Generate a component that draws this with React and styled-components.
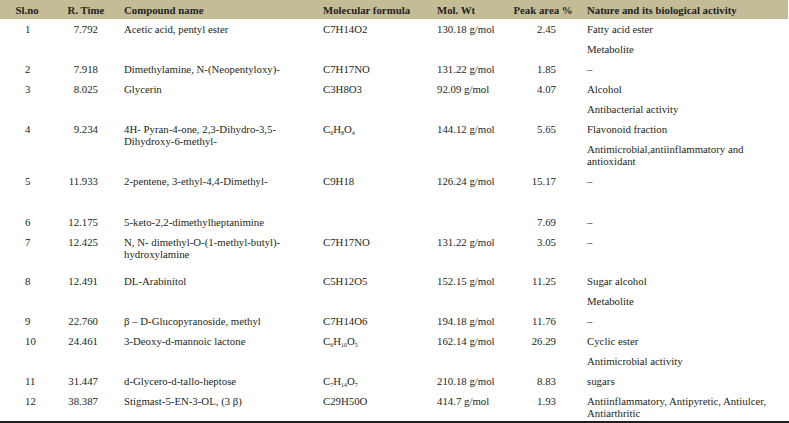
import React from 'react';
import styled, { createGlobalStyle } from 'styled-components';

const Global = createGlobalStyle`
  html, body { margin: 0; padding: 0; background: #ffffff; }
  body {
    font-family: "Liberation Serif", "Times New Roman", Times, serif;
    color: #231f20;
  }
`;

const COLS = '54px 64px 199px 114px 77px 70px 1fr';

const Table = styled.div`
  width: 789px;
  border-bottom: 2px solid #231f20;
  font-family: "Liberation Serif", "Times New Roman", Times, serif;
`;

const HeadRow = styled.div`
  display: grid;
  grid-template-columns: ${COLS};
  align-items: center;
  width: 788px;
  height: 19px;
  background: #c4bc97;
  font-weight: bold;
  font-size: 10.8px;
  line-height: 12px;
`;

const HeadCell = styled.div`
  text-align: ${(p) => p.$align || 'left'};
  padding-left: ${(p) => p.$pl || 0}px;
  white-space: nowrap;
`;

const Row = styled.div`
  display: grid;
  grid-template-columns: ${COLS};
  align-items: start;
  box-sizing: border-box;
  min-height: ${(p) => p.$minH || 0}px;
  padding: 4px 0 ${(p) => (p.$pb ?? 4)}px;
  font-size: 10.8px;
  line-height: 12px;
`;

const NumCell = styled.div`
  padding-left: 25px;
`;

const TimeCell = styled.div`
  text-align: right;
  padding-right: 20px;
`;

const TextCell = styled.div`
  padding-left: 6px;
  white-space: nowrap;
`;

const PeakCell = styled.div`
  text-align: right;
  padding-right: 22px;
`;

const NatureCell = styled.div`
  display: flex;
  flex-direction: column;
  gap: 8px;
  padding: 0 14px 0 9px;
  white-space: nowrap;
`;

const Sub = styled.sub`
  font-size: 6px;
  line-height: 0;
  vertical-align: -2px;
`;

const F = ({ parts }) => (
  <>
    {parts.map((p, i) =>
      i % 2 === 0 ? <span key={i}>{p}</span> : <Sub key={i}>{p}</Sub>
    )}
  </>
);

const rows = [
  { n: '1', t: '7.792', name: ['Acetic acid, pentyl ester'], f: 'C7H14O2', w: '130.18 g/mol', p: '2.45', nat: [['Fatty acid ester'], ['Metabolite']] },
  { n: '2', t: '7.918', name: ['Dimethylamine, N-(Neopentyloxy)-'], f: 'C7H17NO', w: '131.22 g/mol', p: '1.85', nat: [['–']] },
  { n: '3', t: '8.025', name: ['Glycerin'], f: 'C3H8O3', w: '92.09 g/mol', p: '4.07', nat: [['Alcohol'], ['Antibacterial activity']] },
  { n: '4', t: '9.234', name: ['4H- Pyran-4-one, 2,3-Dihydro-3,5-', 'Dihydroxy-6-methyl-'], f: ['C', '6', 'H', '8', 'O', '4'], w: '144.12 g/mol', p: '5.65', nat: [['Flavonoid fraction'], ['Antimicrobial,antiinflammatory and', 'antioxidant']] },
  { n: '5', t: '11.933', name: ['2-pentene, 3-ethyl-4,4-Dimethyl-'], f: 'C9H18', w: '126.24 g/mol', p: '15.17', nat: [['–']], minH: 41 },
  { n: '6', t: '12.175', name: ['5-keto-2,2-dimethylheptanimine'], f: '', w: '', p: '7.69', nat: [['–']] },
  { n: '7', t: '12.425', name: ['N, N- dimethyl-O-(1-methyl-butyl)-', 'hydroxylamine'], f: 'C7H17NO', w: '131.22 g/mol', p: '3.05', nat: [['–']], minH: 39 },
  { n: '8', t: '12.491', name: ['DL-Arabinitol'], f: 'C5H12O5', w: '152.15 g/mol', p: '11.25', nat: [['Sugar alcohol'], ['Metabolite']] },
  { n: '9', t: '22.760', name: ['β – D-Glucopyranoside, methyl'], f: 'C7H14O6', w: '194.18 g/mol', p: '11.76', nat: [['–']] },
  { n: '10', t: '24.461', name: ['3-Deoxy-d-mannoic lactone'], f: ['C', '6', 'H', '10', 'O', '5'], w: '162.14 g/mol', p: '26.29', nat: [['Cyclic ester'], ['Antimicrobial activity']] },
  { n: '11', t: '31.447', name: ['d-Glycero-d-tallo-heptose'], f: ['C', '7', 'H', '14', 'O', '7'], w: '210.18 g/mol', p: '8.83', nat: [['sugars']] },
  { n: '12', t: '38.387', name: ['Stigmast-5-EN-3-OL, (3 β)'], f: 'C29H50O', w: '414.7 g/mol', p: '1.93', nat: [['Antiinflammatory, Antipyretic, Antiulcer,', 'Antiarthritic']], pb: 2 },
];

const Lines = ({ lines }) =>
  lines.map((l, i) => (
    <React.Fragment key={i}>
      {i > 0 && <br />}
      {l}
    </React.Fragment>
  ));

export default function App() {
  return (
    <>
      <Global />
      <Table>
        <HeadRow>
          <HeadCell $align="center">Sl.no</HeadCell>
          <HeadCell $align="center">R. Time</HeadCell>
          <HeadCell $pl={6}>Compound name</HeadCell>
          <HeadCell $pl={6}>Molecular formula</HeadCell>
          <HeadCell $pl={6}>Mol. Wt</HeadCell>
          <HeadCell $align="center">Peak area %</HeadCell>
          <HeadCell $pl={9}>Nature and its biological activity</HeadCell>
        </HeadRow>
        {rows.map((r) => (
          <Row key={r.n} $minH={r.minH} $pb={r.pb}>
            <NumCell>{r.n}</NumCell>
            <TimeCell>{r.t}</TimeCell>
            <TextCell>
              <Lines lines={r.name} />
            </TextCell>
            <TextCell>{Array.isArray(r.f) ? <F parts={r.f} /> : r.f}</TextCell>
            <TextCell>{r.w}</TextCell>
            <PeakCell>{r.p}</PeakCell>
            <NatureCell>
              {r.nat.map((para, i) => (
                <div key={i}>
                  <Lines lines={para} />
                </div>
              ))}
            </NatureCell>
          </Row>
        ))}
      </Table>
    </>
  );
}
